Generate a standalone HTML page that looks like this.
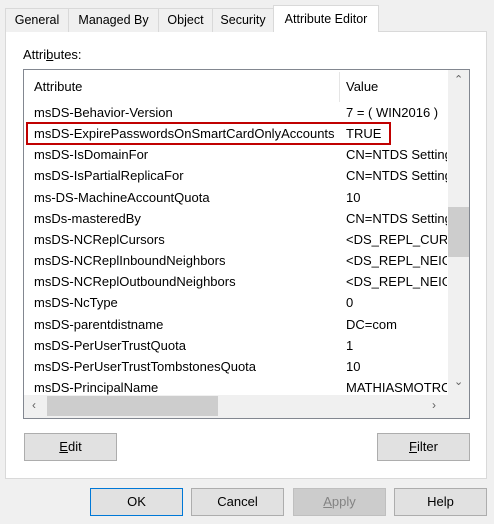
<!DOCTYPE html>
<html><head><style>
*{margin:0;padding:0;box-sizing:border-box}
body{width:494px;height:524px;background:#f0f0f0;font-family:"Liberation Sans",sans-serif;font-size:12px;color:#000;position:relative;overflow:hidden}
.a{position:absolute}
.tab{position:absolute;top:8px;height:24px;background:#f0f0f0;border:1px solid #d9d9d9;border-bottom:none;text-align:center;line-height:22px;font-size:12.5px}
.btn{position:absolute;height:28px;background:#e1e1e1;border:1px solid #adadad;text-align:center;line-height:26px;font-size:13px}
.row{position:absolute;left:10px;height:21px;line-height:21px;white-space:nowrap;font-size:13px}
.v{position:absolute;left:322px;height:21px;line-height:21px;white-space:nowrap;font-size:13px;width:101px;overflow:hidden}
</style></head><body>
<div class="a" style="left:5px;top:31px;width:482px;height:448px;background:#fff;border:1px solid #d9d9d9"></div>
<div class="tab" style="left:5px;width:64px">General</div>
<div class="tab" style="left:68px;width:91px">Managed By</div>
<div class="tab" style="left:158px;width:55px">Object</div>
<div class="tab" style="left:212px;width:62px">Security</div>
<div class="tab" style="left:273px;top:5px;height:27px;width:106px;background:#fff;border-color:#d9d9d9;line-height:26px">Attribute Editor</div>
<div class="a" style="left:23px;top:47px;font-size:13px">Attri<u>b</u>utes:</div>
<div class="a" style="left:23px;top:69px;width:447px;height:350px;border:1px solid #828790;background:#fff;overflow:hidden">
 <div class="a" style="left:315px;top:2px;width:1px;height:30px;background:#e5e5e5"></div>
 <div class="row" style="top:6px">Attribute</div>
 <div class="v" style="top:6px">Value</div>
 <div class="row" style="top:32px">msDS-Behavior-Version</div><div class="v" style="top:32px">7 = ( WIN2016 )</div>
 <div class="row" style="top:53px">msDS-ExpirePasswordsOnSmartCardOnlyAccounts</div><div class="v" style="top:53px">TRUE</div>
 <div class="row" style="top:74px">msDS-IsDomainFor</div><div class="v" style="top:74px">CN=NTDS Settings</div>
 <div class="row" style="top:95px">msDS-IsPartialReplicaFor</div><div class="v" style="top:95px">CN=NTDS Settings</div>
 <div class="row" style="top:117px">ms-DS-MachineAccountQuota</div><div class="v" style="top:117px">10</div>
 <div class="row" style="top:138px">msDs-masteredBy</div><div class="v" style="top:138px">CN=NTDS Settings</div>
 <div class="row" style="top:159px">msDS-NCReplCursors</div><div class="v" style="top:159px">&lt;DS_REPL_CURSOR</div>
 <div class="row" style="top:180px">msDS-NCReplInboundNeighbors</div><div class="v" style="top:180px">&lt;DS_REPL_NEIGHBOR</div>
 <div class="row" style="top:201px">msDS-NCReplOutboundNeighbors</div><div class="v" style="top:201px">&lt;DS_REPL_NEIGHBOR</div>
 <div class="row" style="top:222px">msDS-NcType</div><div class="v" style="top:222px">0</div>
 <div class="row" style="top:244px">msDS-parentdistname</div><div class="v" style="top:244px">DC=com</div>
 <div class="row" style="top:265px">msDS-PerUserTrustQuota</div><div class="v" style="top:265px">1</div>
 <div class="row" style="top:286px">msDS-PerUserTrustTombstonesQuota</div><div class="v" style="top:286px">10</div>
 <div class="row" style="top:307px">msDS-PrincipalName</div><div class="v" style="top:307px">MATHIASMOTRON</div>
 <div class="a" style="left:2px;top:52px;width:365px;height:23px;border:2px solid #c00000"></div>
 <div class="a" style="left:424px;top:0;width:22px;height:325px;background:#f0f0f0"></div>
 <div class="a" style="left:424px;top:137px;width:22px;height:50px;background:#cdcdcd"></div>
 <div class="a" style="left:430px;top:3px;font-size:11px;color:#606060">&#8963;</div>
 <div class="a" style="left:430px;top:305px;font-size:11px;color:#606060">&#8964;</div>
 <div class="a" style="left:0;top:325px;width:446px;height:24px;background:#f0f0f0"></div>
 <div class="a" style="left:23px;top:326px;width:171px;height:20px;background:#cdcdcd"></div>
 <div class="a" style="left:8px;top:328px;font-size:12px;color:#606060">&#8249;</div>
 <div class="a" style="left:408px;top:328px;font-size:12px;color:#606060">&#8250;</div>
 <div class="a" style="left:424px;top:325px;width:22px;height:24px;background:#f0f0f0"></div>
</div>
<div class="btn" style="left:24px;top:433px;width:93px"><u>E</u>dit</div>
<div class="btn" style="left:377px;top:433px;width:93px"><u>F</u>ilter</div>
<div class="btn" style="left:90px;top:488px;width:93px;border:1px solid #0078d7">OK</div>
<div class="btn" style="left:191px;top:488px;width:93px">Cancel</div>
<div class="btn" style="left:293px;top:488px;width:93px;background:#cccccc;border-color:#bfbfbf;color:#838383"><u>A</u>pply</div>
<div class="btn" style="left:394px;top:488px;width:93px">Help</div>
</body></html>
